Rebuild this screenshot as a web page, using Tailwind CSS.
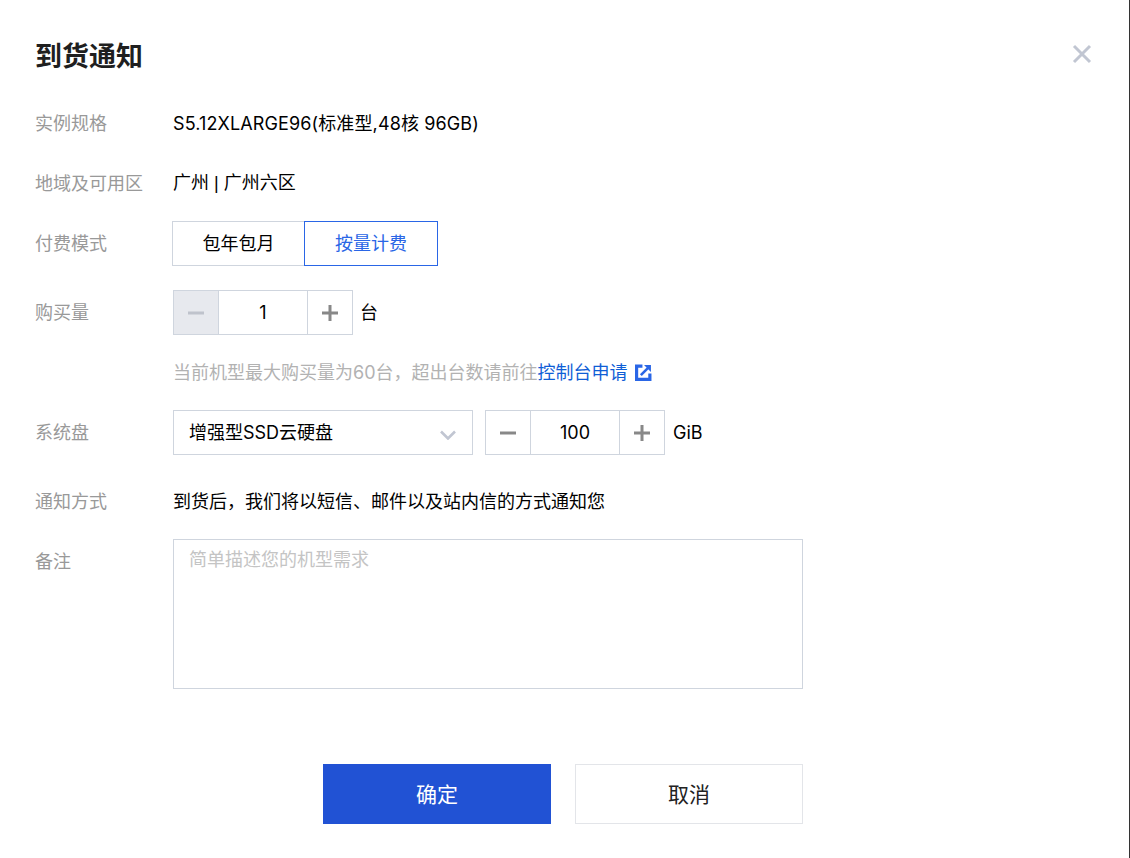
<!DOCTYPE html>
<html lang="zh-CN">
<head>
<meta charset="utf-8">
<script src="https://cdn.jsdelivr.net/npm/@tailwindcss/browser@4"></script>
</head>
<body class="bg-white">
<div class="relative w-[1130px] h-[858px] overflow-hidden bg-white pl-[35px] font-['Inter','Noto_Sans_CJK_SC',sans-serif] text-[18px] text-black">
  <h1 class="h-[36px] mt-[39px] mb-[30px] text-[27px] leading-[36px] font-bold text-[#1f1f1f]">到货通知</h1>
  <button class="absolute left-[1072px] top-[44px] w-[20px] h-[20px]" aria-label="关闭">
    <svg viewBox="0 0 20 20" class="w-[20px] h-[20px]"><path d="M2 2L18 18M18 2L2 18" stroke="#c1c6d2" stroke-width="3" fill="none"/></svg>
  </button>

  <div class="flex flex-col">
    <div class="flex items-center h-[36px]">
      <div class="w-[138px] text-[#999]">实例规格</div>
      <div class="tracking-[0.12px]">S5.12XLARGE96(标准型,48核 96GB)</div>
    </div>
    <div class="flex items-center h-[36px] mt-[24px]">
      <div class="w-[138px] text-[#999]">地域及可用区</div>
      <div>广州 <span class="font-['Liberation_Sans']">|</span> 广州六区</div>
    </div>
    <div class="flex items-center h-[45px] mt-[20px]">
      <div class="w-[138px] text-[#999]">付费模式</div>
      <div class="flex h-[45px] -ml-px">
        <div class="w-[132px] flex items-center justify-center border border-r-0 border-[#cfd5de]">包年包月</div>
        <div class="w-[134px] flex items-center justify-center border border-[#2a66e6] text-[#2a66e6]">按量计费</div>
      </div>
    </div>
    <div class="flex items-center h-[45px] mt-[24px]">
      <div class="w-[138px] text-[#999]">购买量</div>
      <div class="flex w-[180px] h-[45px] border border-[#cfd5de]">
        <div class="w-[45px] flex items-center justify-center bg-[#e7e9ee] border-r border-[#cfd5de]">
          <svg viewBox="0 0 16 16" class="w-[16px] h-[16px]"><path d="M0 8H16" stroke="#bfc3cc" stroke-width="3"/></svg>
        </div>
        <div class="flex-1 flex items-center justify-center">1</div>
        <div class="w-[45px] flex items-center justify-center border-l border-[#cfd5de]">
          <svg viewBox="0 0 16 16" class="w-[16px] h-[16px]"><path d="M0 8H16M8 0V16" stroke="#888" stroke-width="3"/></svg>
        </div>
      </div>
      <div class="ml-[7px]">台</div>
    </div>
    <div class="flex items-center h-[36px] mt-[19px] pl-[138px] text-[#b2b2b2]">
      <span>当前机型最大购买量为60台，超出台数请前往</span><span class="text-[#0f5ed6]">控制台申请</span>
      <svg viewBox="0 0 16 16" class="ml-[7px] w-[17px] h-[17px]"><path d="M7 2H1.5V14.5H14V9" stroke="#2a66e6" stroke-width="3" fill="none"/><path d="M5.5 10.5L13 3" stroke="#2a66e6" stroke-width="2.4" fill="none"/><path d="M8.5 1H15V7.5Z" fill="#2a66e6"/></svg>
    </div>
    <div class="flex items-center h-[45px] mt-[20px]">
      <div class="w-[138px] text-[#999]">系统盘</div>
      <div class="flex items-center justify-between w-[300px] h-[45px] border border-[#cfd5de] pl-[15px] pr-[16px]">
        <span>增强型SSD云硬盘</span>
        <svg viewBox="0 0 16 10" class="w-[16px] h-[10px] mt-[4px]"><path d="M1 1.5L8 8.5L15 1.5" stroke="#c1c6d2" stroke-width="2.6" fill="none"/></svg>
      </div>
      <div class="flex w-[180px] h-[45px] ml-[12px] border border-[#cfd5de]">
        <div class="w-[45px] flex items-center justify-center border-r border-[#cfd5de]">
          <svg viewBox="0 0 16 16" class="w-[16px] h-[16px]"><path d="M0 8H16" stroke="#888" stroke-width="3"/></svg>
        </div>
        <div class="flex-1 flex items-center justify-center">100</div>
        <div class="w-[45px] flex items-center justify-center border-l border-[#cfd5de]">
          <svg viewBox="0 0 16 16" class="w-[16px] h-[16px]"><path d="M0 8H16M8 0V16" stroke="#888" stroke-width="3"/></svg>
        </div>
      </div>
      <div class="ml-[8px]">GiB</div>
    </div>
    <div class="flex items-center h-[36px] mt-[28px]">
      <div class="w-[138px] text-[#999]">通知方式</div>
      <div>到货后，我们将以短信、邮件以及站内信的方式通知您</div>
    </div>
    <div class="flex mt-[20px]">
      <div class="w-[138px] h-[36px] mt-[5px] leading-[36px] text-[#999]">备注</div>
      <div class="w-[630px] h-[150px] border border-[#cfd5de] px-[15px] py-[4px] leading-[32px] text-[#c4c4c4]">简单描述您的机型需求</div>
    </div>
    <div class="flex mt-[75px] ml-[288px] gap-[24px]">
      <button class="w-[228px] h-[60px] pt-[1px] bg-[#2152d4] text-white text-[21px]">确定</button>
      <button class="w-[228px] h-[60px] pt-[1px] border border-[#e3e5e9] text-[#222] text-[21px]">取消</button>
    </div>
  </div>
  <div class="absolute right-0 top-0 w-px h-full bg-[#333]"></div>
</div>
</body>
</html>
